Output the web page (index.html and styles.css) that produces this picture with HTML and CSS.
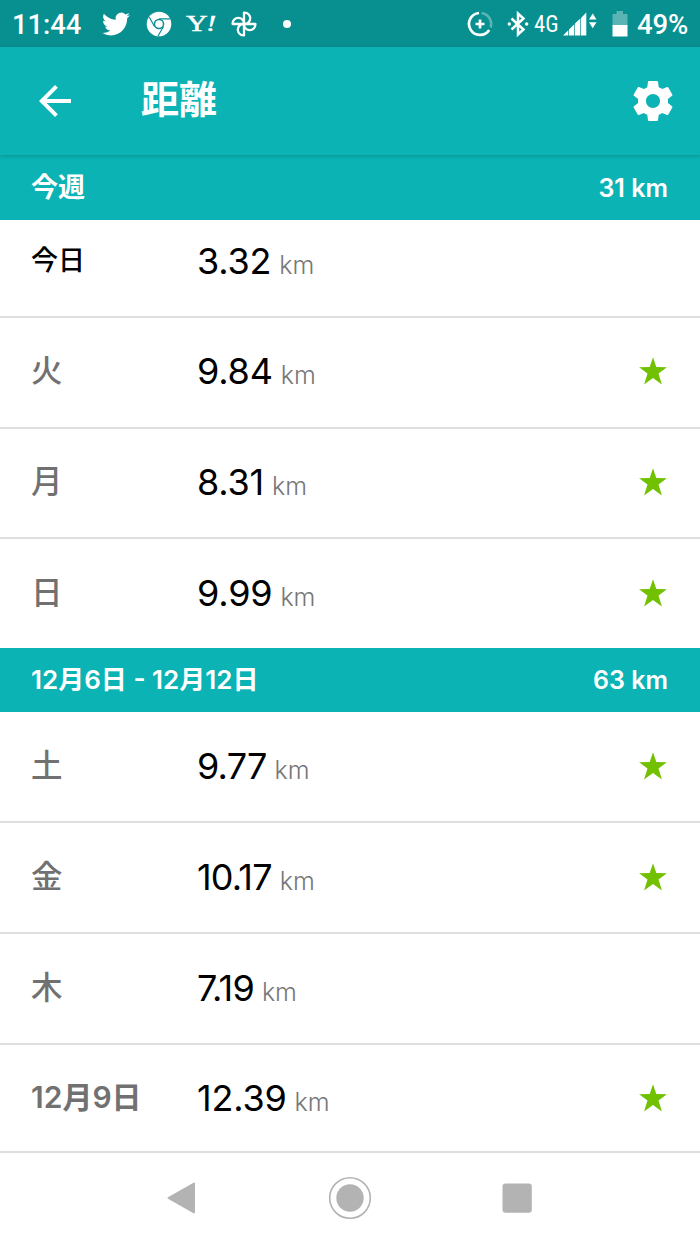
FILE: index.html
```html
<!DOCTYPE html>
<html lang="ja">
<head>
  <meta charset="UTF-8">
  <meta name="viewport" content="width=device-width, initial-scale=1.0">
  <title>距離</title>
  <link rel="stylesheet" href="styles.css">
</head>
<body>
  <svg class="defs" aria-hidden="true">
    <symbol id="star" viewBox="0 0 28 28">
      <path d="M14 .2 17.300 10 27.900 10.200 19.500 16.500 22.900 27.500 14 21 5.100 27.500 8.500 16.500.1 10.200 10.700 10z"/>
    </symbol>
  </svg>

  <div class="status-bar">
    <div class="status-left">
      <span class="clock">11:44</span>
      <svg class="icon-twitter" viewBox="0 0 24 24"><path d="M23.953 4.57a10 10 0 01-2.825.775 4.958 4.958 0 002.163-2.723c-.951.555-2.005.959-3.127 1.184a4.92 4.92 0 00-8.384 4.482C7.69 8.095 4.067 6.13 1.64 3.162a4.822 4.822 0 00-.666 2.475c0 1.71.87 3.213 2.188 4.096a4.904 4.904 0 01-2.228-.616v.06a4.923 4.923 0 003.946 4.827 4.996 4.996 0 01-2.212.085 4.936 4.936 0 004.604 3.417 9.867 9.867 0 01-6.102 2.105c-.39 0-.779-.023-1.17-.067a13.995 13.995 0 007.557 2.209c9.053 0 13.998-7.496 13.998-13.985 0-.21 0-.42-.015-.63A9.935 9.935 0 0024 4.59z"/></svg>
      <svg class="icon-chrome" viewBox="0 0 26 26">
        <circle cx="13" cy="13" r="12.3"/>
        <g class="cut">
          <circle cx="13" cy="13" r="4.700"/>
          <path d="M13 7.800H24M8.500 15.500 3.200 6M17.500 15.500 12 25"/>
        </g>
        <circle cx="13" cy="13" r="3.800"/>
      </svg>
      <span class="yahoo">Y<i>!</i></span>
      <svg class="icon-photos" viewBox="0 0 26 26">
        <path d="M13 13V1.600H13.500A5.700 5.700 0 0 1 13.500 13M13 13H24.400V13.500A5.700 5.700 0 0 1 13 13.500M13 13V24.400H12.500A5.700 5.700 0 0 1 12.500 13M13 13H1.600V12.500A5.700 5.700 0 0 1 13 12.500"/>
      </svg>
      <span class="dot"></span>
    </div>
    <div class="status-right">
      <svg class="icon-saver" viewBox="0 0 26 26">
        <path d="M12 2A11 11 0 1 0 22.200 19M8.500 13h9M13 8.500v9"/>
        <path class="dim" d="M14.500 2A11 11 0 0 1 23.500 16.500"/>
      </svg>
      <svg class="icon-bluetooth" viewBox="0 0 22 26">
        <path d="M4.500 7.500 16.500 18.500 11 23.500V2.500L16.500 7.500 4.500 18.500"/>
        <circle cx="2.300" cy="13" r="1.700"/><circle cx="19.700" cy="13" r="1.700"/>
      </svg>
      <span class="network">4G</span>
      <svg class="icon-signal" viewBox="0 0 34 26">
        <path d="M0 24.500 5.300 19.200V24.500zM6 18.500l5.300-5.300v11.300H6zM12 12.500 17.300 7.500v17h-5.300zM18 7l5.300-5.500v23h-5.300z"/>
        <path d="M26 8.500h7.500L29.700 2.500zM26 11.200h7.500L29.700 17.200z"/>
      </svg>
      <svg class="icon-battery" viewBox="0 0 16 26">
        <path class="dim-fill" d="M4.500 0h6.500v3H15.500v11H.5V3h4z"/>
        <path d="M.5 14h15v11.500H.5z"/>
      </svg>
      <span class="percent">49%</span>
    </div>
  </div>

  <header class="app-bar">
    <svg class="icon-nav" viewBox="0 0 24 24"><path d="M20 11H7.830l5.590-5.590L12 4l-8 8 8 8 1.410-1.410L7.830 13H20v-2z"/></svg>
    <h1 class="title">距離</h1>
    <svg class="icon-nav" viewBox="0 0 24 24"><path d="M19.43 12.98c.04-.32.07-.64.07-.98s-.03-.66-.07-.98l2.110-1.650c.19-.15.24-.42.12-.64l-2-3.460c-.12-.22-.39-.3-.61-.22l-2.490 1c-.52-.4-1.080-.73-1.690-.98l-.38-2.650C14.460 2.180 14.250 2 14 2h-4c-.25 0-.46.18-.49.42l-.38 2.650c-.61.25-1.170.59-1.690.98l-2.490-1c-.23-.09-.49 0-.61.22l-2 3.460c-.13.22-.07.49.12.64l2.110 1.650c-.04.32-.07.65-.07.98s.03.66.07.98l-2.110 1.650c-.19.15-.24.42-.12.64l2 3.460c.12.22.39.3.61.22l2.490-1c.52.4 1.080.73 1.690.98l.38 2.650c.03.24.24.42.49.42h4c.25 0 .46-.18.49-.42l.38-2.650c.61-.25 1.170-.59 1.690-.98l2.490 1c.23.09.49 0 .61-.22l2-3.460c.12-.22.07-.49-.12-.64l-2.110-1.650zM12 15.500c-1.930 0-3.500-1.570-3.500-3.500s1.570-3.500 3.500-3.500 3.500 1.570 3.500 3.500-1.570 3.500-3.500 3.500z"/></svg>
  </header>

  <main>
    <section class="week current">
      <h2 class="week-header"><span class="range">今週</span><span class="total">31 km</span></h2>
      <div class="row today">
        <span class="day">今日</span>
        <span class="distance"><span class="value">3.32</span><span class="unit">km</span></span>
      </div>
      <div class="row">
        <span class="day">火</span>
        <span class="distance"><span class="value">9.84</span><span class="unit">km</span></span>
        <svg class="star"><use href="#star"/></svg>
      </div>
      <div class="row">
        <span class="day">月</span>
        <span class="distance"><span class="value">8.31</span><span class="unit">km</span></span>
        <svg class="star"><use href="#star"/></svg>
      </div>
      <div class="row">
        <span class="day">日</span>
        <span class="distance"><span class="value">9.99</span><span class="unit">km</span></span>
        <svg class="star"><use href="#star"/></svg>
      </div>
    </section>

    <section class="week">
      <h2 class="week-header"><span class="range dates">12月6日 - 12月12日</span><span class="total">63 km</span></h2>
      <div class="row">
        <span class="day">土</span>
        <span class="distance"><span class="value tight">9.77</span><span class="unit">km</span></span>
        <svg class="star"><use href="#star"/></svg>
      </div>
      <div class="row">
        <span class="day">金</span>
        <span class="distance"><span class="value tight">10.17</span><span class="unit">km</span></span>
        <svg class="star"><use href="#star"/></svg>
      </div>
      <div class="row">
        <span class="day">木</span>
        <span class="distance"><span class="value tight">7.19</span><span class="unit">km</span></span>
      </div>
      <div class="row">
        <span class="day date">12月9日</span>
        <span class="distance"><span class="value">12.39</span><span class="unit">km</span></span>
        <svg class="star"><use href="#star"/></svg>
      </div>
    </section>
  </main>

  <nav class="nav-bar">
    <svg viewBox="0 0 44 44"><path class="round" d="M7.500 22 33 7.500V36.500z"/></svg>
    <svg viewBox="0 0 44 44"><circle class="ring" cx="22" cy="22" r="20.300"/><circle cx="22" cy="22" r="13.700"/></svg>
    <svg viewBox="0 0 44 44"><rect x="7.500" y="7.500" width="29.300" height="29.300" rx="3"/></svg>
  </nav>
</body>
</html>
```

FILE: styles.css
```css
* {
  box-sizing: border-box;
}
body {
  margin: 0;
  height: 1244px;
  display: flex;
  flex-direction: column;
  background-color: #fff;
  font-family: Inter, "Noto Sans CJK JP", sans-serif;
  overflow: hidden;
}
h1,
h2 {
  margin: 0;
}
svg {
  display: block;
  flex: none;
}
.defs {
  display: none;
}

/* Status bar */
.status-bar {
  display: flex;
  justify-content: space-between;
  height: 47px;
  padding: 0 12px;
  background-color: #088f90;
  color: #fff;
  fill: #fff;
  font-family: Roboto, sans-serif;
}
.status-left,
.status-right {
  display: flex;
  align-items: center;
}
.clock,
.percent {
  font-size: 27.5px;
  font-weight: 500;
  line-height: 47px;
  padding-top: 2px;
}
.clock {
  width: 90px;
  letter-spacing: -0.1px;
}
.icon-twitter {
  width: 28px;
  height: 28px;
}
.icon-chrome {
  width: 26px;
  height: 26px;
  margin-left: 16px;
}
.icon-chrome .cut {
  fill: #088f90;
  stroke: #088f90;
  stroke-width: 1.2;
}
.yahoo {
  width: 30px;
  margin-left: 14px;
  font-family: "Liberation Serif", serif;
  font-size: 23px;
  letter-spacing: -1px;
  -webkit-text-stroke: 0.5px #fff;
  transform: scaleX(1.3);
  transform-origin: left;
}
.icon-photos {
  width: 26px;
  height: 26px;
  margin-left: 15px;
  fill: none;
  stroke: #fff;
  stroke-width: 2.3;
  stroke-linejoin: round;
}
.dot {
  width: 8px;
  height: 8px;
  margin-left: 26px;
  border-radius: 50%;
  background-color: #fff;
}
.icon-saver {
  width: 26px;
  height: 26px;
  fill: none;
  stroke: #fff;
  stroke-width: 2.7;
}
.icon-saver .dim {
  stroke: #5ab4b4;
}
.icon-bluetooth {
  width: 22px;
  height: 26px;
  margin-left: 14px;
}
.icon-bluetooth path {
  fill: none;
  stroke: #fff;
  stroke-width: 2.5;
}
.network {
  width: 26px;
  margin-left: 5px;
  font-family: "Roboto Condensed", Roboto, sans-serif;
  font-size: 24px;
  transform: scaleX(0.94);
  transform-origin: left;
}
.icon-signal {
  width: 34px;
  height: 26px;
  margin-left: 3px;
}
.icon-battery {
  width: 16px;
  height: 26px;
  margin-left: 15px;
}
.icon-battery .dim-fill {
  fill: #5ab4b4;
}
.percent {
  margin-left: 9px;
  letter-spacing: -0.2px;
}

/* App bar */
.app-bar {
  position: relative;
  display: flex;
  align-items: center;
  height: 108px;
  padding: 0 23px 0 31px;
  background-color: #0bb3b4;
  box-shadow: 0 1px 4px rgba(0, 0, 0, 0.2);
  color: #fff;
  fill: #fff;
}
.icon-nav {
  width: 48px;
  height: 48px;
}
.title {
  flex: 1;
  margin-left: 62px;
  font-size: 38px;
  font-weight: 700;
  line-height: 50px;
  padding-bottom: 4px;
}

/* Weeks */
.week-header {
  display: flex;
  align-items: center;
  justify-content: space-between;
  height: 64px;
  padding: 0 32px 0 31px;
  background-color: #0bb3b4;
  color: #fff;
  font-size: 27px;
  font-weight: 600;
}
.current .week-header {
  height: 65px;
}
.total {
  font-size: 25px;
}
.range {
  padding-bottom: 4px;
}
.dates {
  font-size: 26px;
  padding-bottom: 5px;
}
.row {
  display: flex;
  align-items: center;
  height: 111px;
  padding: 0 33px 2px 31px;
  border-bottom: 2px solid #dedede;
}
.current .row {
  height: 110.5px;
}
.current .today {
  height: 98px;
  padding-bottom: 14px;
}
.row:last-child {
  border-bottom: 0;
  padding-bottom: 5px;
}
.current .row:last-child {
  height: 109px;
  padding-bottom: 1px;
}
.day {
  width: 166px;
  padding-bottom: 6px;
  color: #717171;
  font-size: 31.5px;
  font-weight: 500;
}
.today .day {
  color: #000;
  font-size: 27px;
}
.day.date {
  font-size: 30px;
  font-weight: 600;
}
.distance {
  flex: 1;
  display: flex;
  align-items: baseline;
}
.value {
  color: #000;
  font-size: 36px;
  letter-spacing: -0.2px;
}
.value.tight {
  letter-spacing: -0.8px;
}
.unit {
  margin-left: 8px;
  color: #777;
  font-size: 25px;
  font-weight: 300;
}
.star {
  width: 28px;
  height: 28px;
  fill: #72c100;
}

/* System navigation */
.week:last-child {
  height: 503px;
  overflow: hidden;
}
.nav-bar {
  flex: 1;
  display: flex;
  align-items: center;
  justify-content: center;
  gap: 123px;
  padding-bottom: 2px;
  border-top: 2px solid #dedede;
  background-color: #fff;
  fill: #b3b3b3;
}
.nav-bar svg {
  width: 44px;
  height: 44px;
}
.nav-bar .round {
  stroke: #b3b3b3;
  stroke-width: 2;
  stroke-linejoin: round;
}
.nav-bar .ring {
  fill: none;
  stroke: #b3b3b3;
  stroke-width: 1.6;
}
```
